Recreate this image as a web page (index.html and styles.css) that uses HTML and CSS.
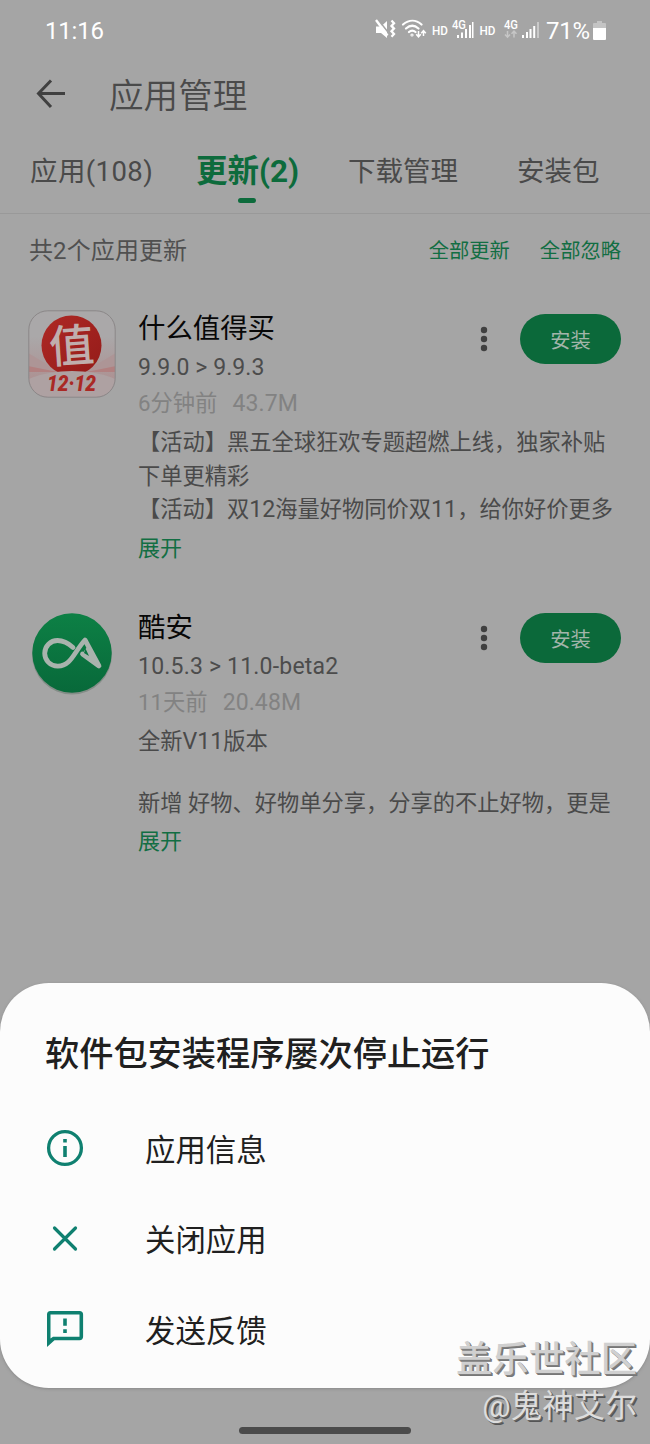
FILE: index.html
```html
<!DOCTYPE html>
<html lang="zh-CN">
<head>
<meta charset="utf-8">
<title>应用管理</title>
<link rel="stylesheet" href="styles.css">
</head>
<body>
<div class="screen">
  <header class="status">
    <span class="clock">11:16</span>
    <svg class="status-icons" width="166" height="24" viewBox="0 0 166 24">
      <g fill="#fff">
        <path d="M2 7.500h5l6-5.500v17l-6-5H2z"/>
        <path d="M3.500 0l12 15" stroke="#a5a5a5" stroke-width="1.600"/>
        <path d="M2 1l11.500 15.500" stroke="#fff" stroke-width="2.400"/>
        <path d="M17.500 1.500l2.500 2.700-2.500 2.700 2.500 2.700-2.500 2.700 2.500 2.700-2.500 2.700" fill="none" stroke="#fff" stroke-width="2.300"/>
      </g>
      <g fill="none" stroke="#fff" stroke-width="2.200" stroke-linecap="round">
        <path d="M29 5.500c6-5 13-5 18.500 0M32 9.500c4-3.500 8.500-3.500 12.500 0M35 13c2-1.800 4.500-1.800 6.500 0"/>
        <circle cx="38" cy="16" r=".5"/>
      </g>
      <path d="M44.500 12v5.500m-2.300-2.300 2.300 2.600 2.300-2.600M49.500 17v-5m-2.300 2.300 2.300-2.600 2.300 2.600" fill="none" stroke="#fff" stroke-width="1.500"/>
      <g fill="#fff" class="net">
        <text x="58" y="15.500" font-size="13" textLength="16" lengthAdjust="spacingAndGlyphs">HD</text>
        <text x="78" y="10" font-size="12" textLength="14" lengthAdjust="spacingAndGlyphs">4G</text>
        <text x="105.500" y="15.500" font-size="13" textLength="16" lengthAdjust="spacingAndGlyphs">HD</text>
        <text x="130" y="10" font-size="12" textLength="14" lengthAdjust="spacingAndGlyphs">4G</text>
        <path d="M83 16h2v3h-2zM87 13.500h2V19h-2zM91 10h2v9h-2zM95 6h2v13h-2zM98 3h1.500v16H98zM148 16h2v3h-2zM152 13h2v6h-2zM155.500 10h2v9h-2zM159.200 7h2v12h-2z"/>
        <path d="M163 3h2v16h-2z" opacity=".4"/>
      </g>
      <path d="M133.500 12v6m-2.500-2.500 2.500 2.700 2.500-2.700M140 18.500v-6m-2.500 2.300 2.500-2.600 2.500 2.600" fill="none" stroke="#c6c6c6" stroke-width="1.500"/>
    </svg>
    <span class="percent">71%</span>
    <svg class="battery" width="13" height="20" viewBox="0 0 13 20"><path d="M4 0h5v2h3q1 0 1 1v4H0V3q0-1 1-1h3z" fill="#c4c4c4"/><path d="M0 7h13v11q0 1-1 1H1q-1 0-1-1z" fill="#fff"/></svg>
  </header>

  <div class="titlebar">
    <svg width="30" height="30" viewBox="0 0 30 30" fill="none" stroke="#404040" stroke-width="3"><path d="M15 1.500 2.500 14.500 15 28M2.500 14.500H29"/></svg>
    <h1>应用管理</h1>
  </div>

  <nav class="tabs">
    <span class="tab tab-apps">应用(108)</span>
    <span class="tab tab-active">更新(2)</span>
    <span class="tab tab-downloads">下载管理</span>
    <span class="tab">安装包</span>
  </nav>

  <div class="summary">
    <span class="count">共2个应用更新</span>
    <a>全部更新</a>
    <a>全部忽略</a>
  </div>

  <main>
    <article class="app">
      <svg class="app-icon" width="88" height="88" viewBox="0 0 88 88">
        <defs>
          <clipPath id="tile"><rect x="1" y="1" width="86" height="86" rx="19"/></clipPath>
          <linearGradient id="tileFill" x2="0" y2="1"><stop offset=".3" stop-color="#aaa8a9"/><stop offset="1" stop-color="#ae8889"/></linearGradient>
          <linearGradient id="red" x2="1" y2="1"><stop stop-color="#ae2925"/><stop offset="1" stop-color="#941b19"/></linearGradient>
        </defs>
        <g clip-path="url(#tile)">
          <path d="M0 0h88v88H0z" fill="url(#tileFill)"/>
          <path d="M0 43l30 18H0zM88 43L58 61h30z" fill="#ad9596"/>
          <path d="M0 56l30 6H0zM88 56L58 62h30z" fill="#b18080"/>
          <circle cx="43.500" cy="35.500" r="30" fill="url(#red)"/>
          <ellipse cx="44" cy="83" rx="56" ry="22" fill="#aea1a2"/>
        </g>
        <rect x=".8" y=".8" width="86.400" height="86.400" rx="19" fill="none" stroke="#8b8788"/>
        <text class="badge-char" x="21" y="52" font-size="45" transform="rotate(-4 44 36)">值</text>
        <text class="badge-date" x="19" y="81" font-size="22.500" textLength="49" lengthAdjust="spacingAndGlyphs">12·12</text>
      </svg>
      <div class="info">
        <div class="top">
          <div class="heading">
            <h2>什么值得买</h2>
            <p class="version v1">9.9.0 &gt; 9.9.3</p>
          </div>
          <svg class="more" width="8" height="26" viewBox="0 0 8 26" fill="#404040"><circle cx="4" cy="4" r="3.200"/><circle cx="4" cy="13" r="3.200"/><circle cx="4" cy="22" r="3.200"/></svg>
          <button class="install">安装</button>
        </div>
        <p class="meta"><span>6分钟前</span><span class="size">43.7M</span></p>
        <div class="notes"><p>【活动】黑五全球狂欢专题超燃上线，独家补贴</p><p>下单更精彩</p><p>【活动】双<span class="num">12</span>海量好物同价双<span class="num">11</span>，给你好价更多</p></div>
        <a class="expand">展开</a>
      </div>
    </article>

    <article class="app">
      <svg class="app-icon" width="88" height="88" viewBox="0 0 88 88">
        <defs><linearGradient id="green" x2="0" y2="1"><stop stop-color="#0d8045"/><stop offset="1" stop-color="#08693a"/></linearGradient></defs>
        <circle cx="44" cy="45.500" r="40" fill="#838d87"/>
        <circle cx="44" cy="44" r="39.700" fill="url(#green)"/>
        <path d="M45 38.500C39 33 34 31.500 29.500 31.500a12.800 12.800 0 0 0 0 25.600C43 57.500 46 43 57 31L71 57 54.500 45" fill="none" stroke="#a9b3ad" stroke-width="4.800" stroke-linecap="round" stroke-linejoin="round"/>
        <path d="M54 45l17 12-12-19z" fill="#a9b3ad"/>
        <path d="M57.500 39.500l3.500 7.500-5-3z" fill="#0a733f"/>
      </svg>
      <div class="info">
        <div class="top">
          <div class="heading">
            <h2>酷安</h2>
            <p class="version v2">10.5.3 &gt; 11.0-beta2</p>
          </div>
          <svg class="more" width="8" height="26" viewBox="0 0 8 26" fill="#404040"><circle cx="4" cy="4" r="3.200"/><circle cx="4" cy="13" r="3.200"/><circle cx="4" cy="22" r="3.200"/></svg>
          <button class="install">安装</button>
        </div>
        <p class="meta"><span>11天前</span><span class="size">20.48M</span></p>
        <div class="notes"><p>全新<span class="num">V11</span>版本</p><p class="blank"></p><p>新增 好物、好物单分享，分享的不止好物，更是</p></div>
        <a class="expand">展开</a>
      </div>
    </article>
  </main>

  <section class="sheet">
    <h3>软件包安装程序屡次停止运行</h3>
    <div class="action">
      <svg width="40" height="40" viewBox="0 0 40 40" fill="none" stroke="#0f8070" stroke-width="3.300"><circle cx="20" cy="20" r="16.400"/><path d="M20 18v11M20 11v3.500" stroke-width="3.600"/></svg>
      <span>应用信息</span>
    </div>
    <div class="action">
      <svg width="40" height="40" viewBox="0 0 40 40" fill="none" stroke="#0f8070" stroke-width="3.200" stroke-linecap="round"><path d="M9.500 10l21 21M30.500 10l-21 21"/></svg>
      <span>关闭应用</span>
    </div>
    <div class="action">
      <svg width="40" height="40" viewBox="0 0 40 40"><path fill="#0f8070" fill-rule="evenodd" d="M5.500 2h29a3.600 3.600 0 0 1 3.600 3.600v22a3.600 3.600 0 0 1-3.600 3.600H9.500L2 38V5.600A3.600 3.600 0 0 1 5.500 2zM5.500 5.500v24L8 27.700h26.500V5.500zM18.200 9.500h3.600v7.300h-3.600zM18.200 20.300h3.600v3.600h-3.600z"/></svg>
      <span>发送反馈</span>
    </div>
  </section>

  <div class="home-bar"></div>
  <div class="watermark"><span class="community">盖乐世社区</span><span class="author">@鬼神艾尔</span></div>
</div>
</body>
</html>
```
FILE: styles.css
```css
* { box-sizing: border-box; margin: 0; padding: 0; }
body { background: #a5a5a5; font-family: Roboto, "Noto Sans CJK SC", sans-serif; color: #4a4a4a; }
h1, h2 { font-weight: 400; }
.screen { position: relative; width: 650px; height: 1444px; overflow: hidden; white-space: nowrap; }

.status { display: flex; align-items: center; height: 62px; padding-left: 45px; color: #fff; }
.clock { width: 329px; font-size: 24px; letter-spacing: -.2px; }
.net text { font-family: Roboto, sans-serif; font-weight: 500; }
.percent { width: 47px; margin-left: 6px; font-size: 24px; letter-spacing: -.3px; }
.battery { margin-bottom: 1px; }

.titlebar { display: flex; align-items: center; height: 67px; padding: 0 0 0 36px; gap: 43px; }
.titlebar svg { margin-bottom: 3px; }
.titlebar h1 { font-size: 34.600px; line-height: 50px; font-weight: 350; }

.tabs { display: flex; height: 85px; padding-left: 30px; border-bottom: 1px solid #999; font-size: 27.500px; line-height: 85px; }
.tab-apps { width: 166px; letter-spacing: .4px; }
.tab-active { display: flex; flex-direction: column; width: 152px; color: #0d6b3c; font-size: 31.500px; font-weight: 700; }
.tab-active::after { content: ""; width: 18px; height: 5px; margin: -16px 0 0 42px; border-radius: 3px; background: #0d6b3c; }
.tab-downloads { width: 169px; }

.summary { display: flex; align-items: center; height: 72px; padding: 0 29px 2px; gap: 30px; color: #505050; font-size: 20.300px; }
.count { margin-right: auto; padding-bottom: 1px; font-size: 24px; letter-spacing: .1px; }
.summary a, .expand { color: #126e43; }

main { padding-top: 22px; }
.app { display: flex; height: 299px; padding-left: 28px; }
.app-icon { flex: none; margin: 2px 22px 0 0; }
.badge-char { fill: #c0aead; font-weight: 500; font-family: "Noto Sans CJK SC", sans-serif; }
.badge-date { fill: #aa2925; font-family: Roboto, sans-serif; font-weight: 900; font-style: italic; }
.info { width: 483px; padding-top: 1px; }
.top { display: flex; height: 77px; }
.heading { width: 342px; }
.heading h2 { color: #080808; font-size: 27.400px; line-height: 40px; }
.version { color: #4c4c4c; font-size: 23px; line-height: 37px; }
.v1 { letter-spacing: .1px; }
.v2 { letter-spacing: .2px; }
.more { margin-top: 17px; }
.install { width: 101px; height: 50px; margin: 5px 0 0 32px; border: 0; border-radius: 25px; background: #0b693a; color: #a2b5aa; font: 20.300px "Noto Sans CJK SC", sans-serif; }
.meta { display: flex; gap: 15px; color: #828282; font-size: 22.300px; line-height: 35px; }
.size { font-size: 23px; letter-spacing: .1px; }
.notes { padding-top: 5px; font-size: 22.250px; line-height: 33.700px; }
.notes p { height: 33.700px; }
.notes .blank { height: 28px; }
.num { font-size: 23.200px; }
.expand { display: block; margin-top: 4px; font-size: 22px; line-height: 36px; }

.sheet { position: absolute; top: 983px; left: 0; width: 650px; height: 405px; padding: 41px 45px 0; border-radius: 49px; background: #fcfcfc; color: #202020; box-shadow: 0 1px 3px #7779; }
.sheet h3 { height: 79px; font-size: 34.200px; font-weight: 500; line-height: 60px; }
.action { display: flex; align-items: center; gap: 60px; height: 90.300px; font-size: 30.400px; }

.home-bar { position: absolute; left: 239px; top: 1427px; width: 172px; height: 7px; border-radius: 4px; background: #4b4b4b; }
.watermark { position: absolute; right: 13px; top: 1335px; display: flex; flex-direction: column; align-items: flex-end; color: #ddd; }
.community { font-size: 36.200px; line-height: 50px; font-weight: 500; color: #d0d0d0; text-shadow: 1px 1px 0 #808080, 2px 2px 0 #777; }
.author { font-size: 31.600px; line-height: 44px; text-shadow: 1px 1px 0 #666, 2px 2px 0 #555; }
```
